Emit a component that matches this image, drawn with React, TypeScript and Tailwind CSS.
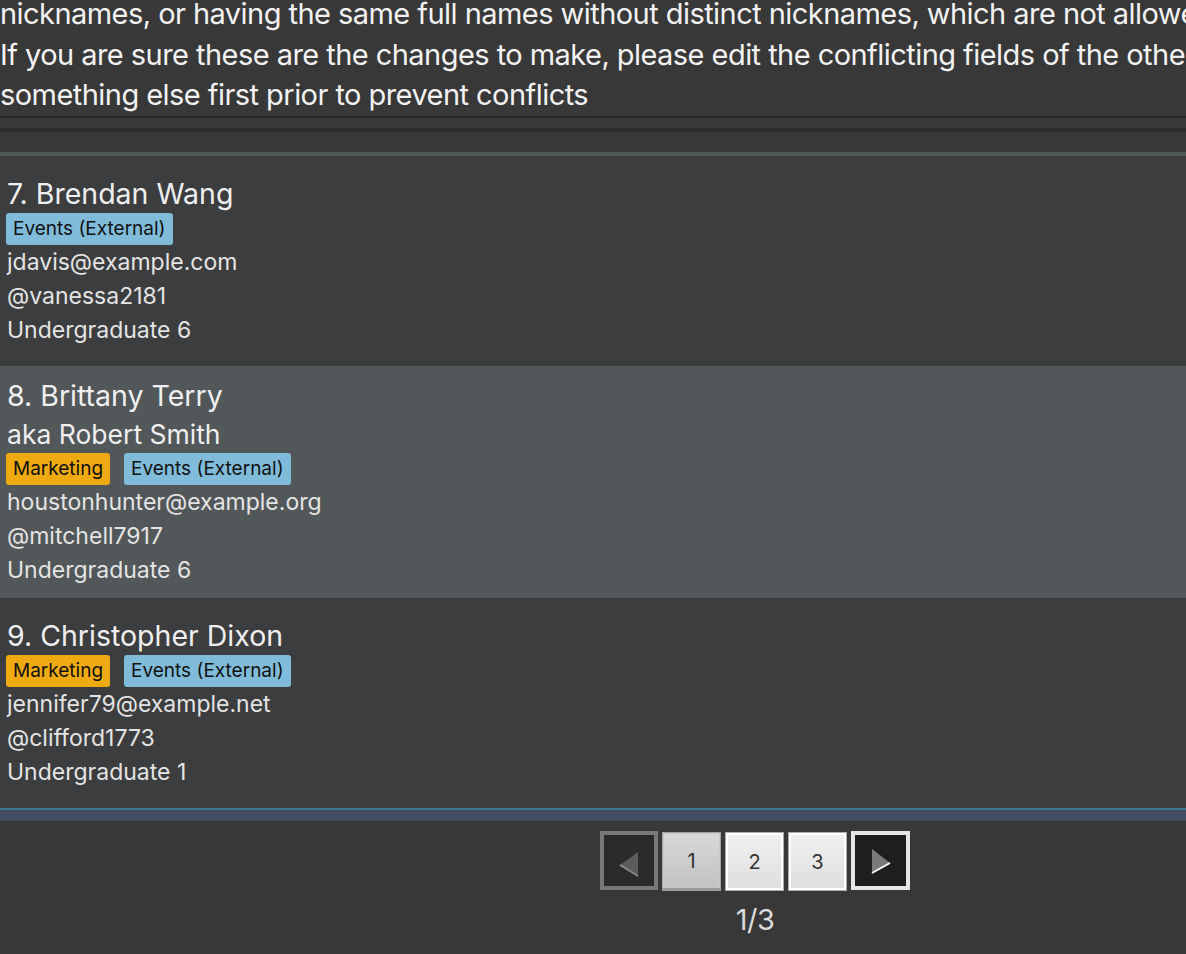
const persons = [
  {
    idx: 7,
    name: "Brendan Wang",
    tags: [{ label: "Events (External)", kind: "events" }],
    email: "jdavis@example.com",
    handle: "@vanessa2181",
    year: "Undergraduate 6",
  },
  {
    idx: 8,
    name: "Brittany Terry",
    aka: "Robert Smith",
    selected: true,
    tags: [
      { label: "Marketing", kind: "marketing" },
      { label: "Events (External)", kind: "events" },
    ],
    email: "houstonhunter@example.org",
    handle: "@mitchell7917",
    year: "Undergraduate 6",
  },
  {
    idx: 9,
    name: "Christopher Dixon",
    tags: [
      { label: "Marketing", kind: "marketing" },
      { label: "Events (External)", kind: "events" },
    ],
    email: "jennifer79@example.net",
    handle: "@clifford1773",
    year: "Undergraduate 1",
  },
];

type Person = (typeof persons)[number] & { aka?: string; selected?: boolean };

function Tag({ label, kind }: { label: string; kind: string }) {
  return (
    <span
      className={
        "inline-block h-[32px] px-[7px] rounded-[3px] text-[19px] leading-[32px] text-[#111111] " +
        (kind === "marketing" ? "bg-[#eeaa10]" : "bg-[#80bcd9]")
      }
    >
      {label}
    </span>
  );
}

function PersonCard({ p }: { p: Person }) {
  return (
    <div
      className={
        "min-h-[210px] py-[11px] flex flex-col justify-center " +
        (p.selected ? "bg-[#52575a]" : "bg-[#3c3d3f]")
      }
    >
      <div className="pl-[7px] h-[38px] text-[28.5px] leading-[38px] text-[#efefef]">
        {p.idx}. {p.name}
      </div>
      {p.aka && (
        <div className="pl-[7px] h-[38px] text-[26.5px] leading-[38px] text-[#efefef]">aka {p.aka}</div>
      )}
      <div className="pl-[6px] flex gap-[14px] h-[32px]">
        {p.tags.map((t, i) => (
          <Tag key={i} label={t.label} kind={t.kind} />
        ))}
      </div>
      <div className="pl-[7px] text-[23px] leading-[34px] text-[#e4e4e4]">
        <div>{p.email}</div>
        <div>{p.handle}</div>
        <div>{p.year}</div>
      </div>
    </div>
  );
}

function PageButton({ n, active }: { n: number; active?: boolean }) {
  return (
    <div
      className={
        "w-[59px] h-[59px] mt-[1px] flex items-center justify-center text-[20px] text-[#333333] border " +
        (active
          ? "border-[#a4a4a4] border-b-[3px] border-b-[#9a9a9a] bg-gradient-to-b from-[#d8d8d8] to-[#c2c2c2] shadow-[inset_0_0_0_1px_#c9c9c9]"
          : "border-[#acacac] bg-gradient-to-b from-[#f0f0f0] to-[#dedede] shadow-[inset_0_0_0_2px_#ffffff]")
      }
    >
      {n}
    </div>
  );
}

export default function App() {
  return (
    <div className="w-[1186px] h-[954px] overflow-hidden bg-[#383838] flex flex-col font-['Inter','Noto_Sans',sans-serif]">
      <div className="h-[116px] overflow-hidden shrink-0">
        <div className="-mt-[6px] text-[29px] leading-[40.5px] tracking-[-0.55px] text-[#f2f2f2] whitespace-nowrap">
          <div>nicknames, or having the same full names without distinct nicknames, which are not allowed.</div>
          <div>If you are sure these are the changes to make, please edit the conflicting fields of the other persons to</div>
          <div>something else first prior to prevent conflicts</div>
        </div>
      </div>
      <div className="h-[2px] bg-[#2b2b2b] shrink-0" />
      <div className="h-[10px] bg-[#3a3a3a] shrink-0" />
      <div className="h-[4px] bg-[#2d2d2d] shrink-0" />
      <div className="h-[20px] bg-[#393939] shrink-0" />
      <div className="h-[4px] bg-[#4e5656] shrink-0" />

      <div className="flex flex-col shrink-0">
        {persons.map((p) => (
          <PersonCard key={p.idx} p={p as Person} />
        ))}
      </div>
      <div className="h-[2px] bg-[#3b7a92] shrink-0" />
      <div className="h-[11px] bg-[#434d60] shrink-0" />

      <div className="ml-[600px] w-[310px] mt-[10px] flex flex-col items-center">
        <div className="flex gap-[4px] items-start">
          <div className="w-[58px] h-[59px] border-[4px] border-[#787878] bg-[#2b2b2b] flex items-center justify-center">
            <svg width="50" height="51" viewBox="0 0 50 51">
              <polygon points="16,30 34,17 34,41" fill="#5c5c5c" />
              <line x1="16" y1="30" x2="34" y2="41" stroke="#8c8c8c" strokeWidth="1.5" />
            </svg>
          </div>
          <PageButton n={1} active />
          <PageButton n={2} />
          <PageButton n={3} />
          <div className="w-[59px] h-[59px] border-[4px] border-[#e6e6e6] bg-[#1e1e1e] flex items-center justify-center">
            <svg width="51" height="51" viewBox="0 0 51 51">
              <polygon points="17,14 35,28 17,38" fill="#7a7a7a" />
              <line x1="17" y1="38" x2="35" y2="28" stroke="#ffffff" strokeWidth="1.8" />
            </svg>
          </div>
        </div>
        <div className="mt-[9px] text-[29px] leading-[40px] tracking-[-0.5px] text-[#dcdcdc]">1/3</div>
      </div>
    </div>
  );
}
